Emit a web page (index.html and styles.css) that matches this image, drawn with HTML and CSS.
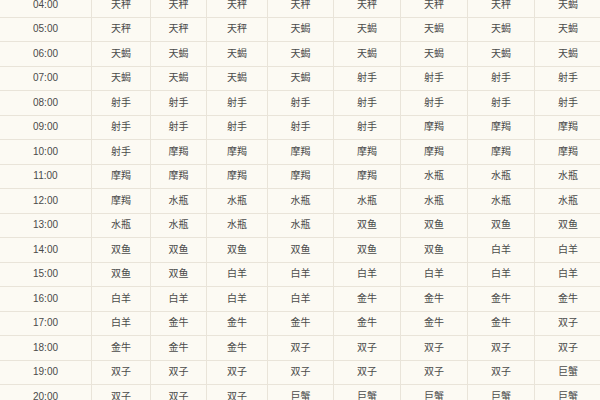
FILE: index.html
```html
<!DOCTYPE html>
<html lang="zh">
<head>
<meta charset="utf-8">
<link rel="stylesheet" href="styles.css">
</head>
<body>
<table class="grid">
  <colgroup>
    <col class="c-time"><col class="c1"><col class="c2"><col class="c3"><col class="c4"><col class="c5"><col class="c6"><col class="c7"><col class="c8">
  </colgroup>
  <tbody>
    <tr><td>04:00</td><td>天秤</td><td>天秤</td><td>天秤</td><td>天秤</td><td>天秤</td><td>天秤</td><td>天秤</td><td>天蝎</td></tr>
    <tr><td>05:00</td><td>天秤</td><td>天秤</td><td>天秤</td><td>天蝎</td><td>天蝎</td><td>天蝎</td><td>天蝎</td><td>天蝎</td></tr>
    <tr><td>06:00</td><td>天蝎</td><td>天蝎</td><td>天蝎</td><td>天蝎</td><td>天蝎</td><td>天蝎</td><td>天蝎</td><td>天蝎</td></tr>
    <tr><td>07:00</td><td>天蝎</td><td>天蝎</td><td>天蝎</td><td>天蝎</td><td>射手</td><td>射手</td><td>射手</td><td>射手</td></tr>
    <tr><td>08:00</td><td>射手</td><td>射手</td><td>射手</td><td>射手</td><td>射手</td><td>射手</td><td>射手</td><td>射手</td></tr>
    <tr><td>09:00</td><td>射手</td><td>射手</td><td>射手</td><td>射手</td><td>射手</td><td>摩羯</td><td>摩羯</td><td>摩羯</td></tr>
    <tr><td>10:00</td><td>射手</td><td>摩羯</td><td>摩羯</td><td>摩羯</td><td>摩羯</td><td>摩羯</td><td>摩羯</td><td>摩羯</td></tr>
    <tr><td>11:00</td><td>摩羯</td><td>摩羯</td><td>摩羯</td><td>摩羯</td><td>摩羯</td><td>水瓶</td><td>水瓶</td><td>水瓶</td></tr>
    <tr><td>12:00</td><td>摩羯</td><td>水瓶</td><td>水瓶</td><td>水瓶</td><td>水瓶</td><td>水瓶</td><td>水瓶</td><td>水瓶</td></tr>
    <tr><td>13:00</td><td>水瓶</td><td>水瓶</td><td>水瓶</td><td>水瓶</td><td>双鱼</td><td>双鱼</td><td>双鱼</td><td>双鱼</td></tr>
    <tr><td>14:00</td><td>双鱼</td><td>双鱼</td><td>双鱼</td><td>双鱼</td><td>双鱼</td><td>双鱼</td><td>白羊</td><td>白羊</td></tr>
    <tr><td>15:00</td><td>双鱼</td><td>双鱼</td><td>白羊</td><td>白羊</td><td>白羊</td><td>白羊</td><td>白羊</td><td>白羊</td></tr>
    <tr><td>16:00</td><td>白羊</td><td>白羊</td><td>白羊</td><td>白羊</td><td>金牛</td><td>金牛</td><td>金牛</td><td>金牛</td></tr>
    <tr><td>17:00</td><td>白羊</td><td>金牛</td><td>金牛</td><td>金牛</td><td>金牛</td><td>金牛</td><td>金牛</td><td>双子</td></tr>
    <tr><td>18:00</td><td>金牛</td><td>金牛</td><td>金牛</td><td>双子</td><td>双子</td><td>双子</td><td>双子</td><td>双子</td></tr>
    <tr><td>19:00</td><td>双子</td><td>双子</td><td>双子</td><td>双子</td><td>双子</td><td>双子</td><td>双子</td><td>巨蟹</td></tr>
    <tr><td>20:00</td><td>双子</td><td>双子</td><td>双子</td><td>巨蟹</td><td>巨蟹</td><td>巨蟹</td><td>巨蟹</td><td>巨蟹</td></tr>
  </tbody>
</table>
</body>
</html>
```

FILE: styles.css
```css
html, body {
  margin: 0;
  padding: 0;
  background: #fcfaf3;
  overflow: hidden;
}

.grid {
  border-collapse: collapse;
  table-layout: fixed;
  width: 602px;
  margin: -8px 0 0 -1px;
  font-family: "Liberation Sans", "Noto Sans CJK SC", sans-serif;
  font-size: 10px;
  color: #4a4a4a;
  background: #fcfaf3;
}

.grid td {
  border: 1px solid #e9e4d9;
  height: 23.5px;
  padding: 0;
  text-align: center;
  vertical-align: middle;
  line-height: 12px;
}

.c-time { width: 92px; }
.c1 { width: 59px; }
.c2 { width: 56px; }
.c3 { width: 61px; }
.c4 { width: 66px; }
.c5 { width: 67px; }
.c6 { width: 67px; }
.c7 { width: 67px; }
.c8 { width: 67px; }
```
